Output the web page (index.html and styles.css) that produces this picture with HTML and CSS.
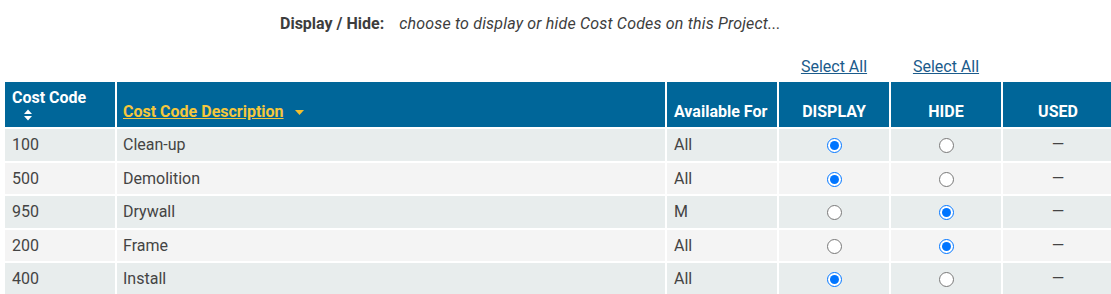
FILE: index.html
```html
<!DOCTYPE html>
<html lang="en">
<head>
<meta charset="utf-8">
<title>Cost Codes</title>
<link rel="stylesheet" href="styles.css">
</head>
<body>
<div class="intro">
  <span class="intro-label">Display / Hide:</span>
  <span class="intro-text">choose to display or hide Cost Codes on this Project...</span>
</div>
<table class="codes">
  <colgroup>
    <col class="c-code"><col class="c-desc"><col class="c-avail"><col class="c-disp"><col class="c-hide"><col class="c-used">
  </colgroup>
  <thead>
    <tr class="select-row">
      <td colspan="3"></td>
      <td><a href="#" class="select-all">Select All</a></td>
      <td><a href="#" class="select-all">Select All</a></td>
      <td></td>
    </tr>
    <tr class="head-row">
      <th class="th-code">
        <div>Cost Code</div>
        <svg class="sort-icon" width="10" height="12" viewBox="0 0 10 12"><path d="M5 0.5 L9 5 L1 5 Z M1 7 L9 7 L5 11.5 Z" fill="#fff"/></svg>
      </th>
      <th class="th-desc"><a href="#" class="sort-link">Cost Code Description</a><svg class="caret" width="9" height="5" viewBox="0 0 9 5"><path d="M0 0 L9 0 L4.5 5 Z" fill="#f2be2e"/></svg></th>
      <th class="th-avail">Available For</th>
      <th class="th-center">DISPLAY</th>
      <th class="th-center">HIDE</th>
      <th class="th-center">USED</th>
    </tr>
  </thead>
  <tbody>
    <tr>
      <td>100</td><td>Clean-up</td><td>All</td>
      <td class="center"><input type="radio" name="r1" checked></td>
      <td class="center"><input type="radio" name="r1"></td>
      <td class="center">—</td>
    </tr>
    <tr>
      <td>500</td><td>Demolition</td><td>All</td>
      <td class="center"><input type="radio" name="r2" checked></td>
      <td class="center"><input type="radio" name="r2"></td>
      <td class="center">—</td>
    </tr>
    <tr>
      <td>950</td><td>Drywall</td><td>M</td>
      <td class="center"><input type="radio" name="r3"></td>
      <td class="center"><input type="radio" name="r3" checked></td>
      <td class="center">—</td>
    </tr>
    <tr>
      <td>200</td><td>Frame</td><td>All</td>
      <td class="center"><input type="radio" name="r4"></td>
      <td class="center"><input type="radio" name="r4" checked></td>
      <td class="center">—</td>
    </tr>
    <tr>
      <td>400</td><td>Install</td><td>All</td>
      <td class="center"><input type="radio" name="r5" checked></td>
      <td class="center"><input type="radio" name="r5"></td>
      <td class="center">—</td>
    </tr>
  </tbody>
</table>
</body>
</html>
```

FILE: styles.css
```css
html, body {
  margin: 0;
  padding: 0;
  overflow: hidden;
  background: #fff;
}
body {
  font-family: Roboto, "Liberation Sans", Arial, sans-serif;
  font-size: 16px;
  color: #444;
}
.intro {
  display: flex;
  gap: 15px;
  padding: 14px 0 0 280px;
  line-height: 19px;
  color: #3d3d3d;
}
.intro-label {
  font-weight: 700;
}
.intro-text {
  font-style: italic;
  letter-spacing: 0.18px;
}
.codes {
  margin: 22px 0 0 3px;
  border-collapse: separate;
  border-spacing: 2px;
  table-layout: fixed;
  width: 1112px;
}
.c-code { width: 110px; }
.c-desc { width: 548px; }
.c-avail { width: 110px; }
.c-disp { width: 110px; }
.c-hide { width: 110px; }
.c-used { width: 110px; }

.select-row td {
  padding: 0 0 4px;
  line-height: 19px;
  text-align: center;
  vertical-align: bottom;
  background: transparent;
}
.select-all {
  color: #1b5b8b;
  text-decoration: underline;
}
.head-row th {
  background: #006699;
  color: #fff;
  font-weight: 700;
  line-height: 19px;
  padding: 6px 7px 6px;
  vertical-align: bottom;
  text-align: left;
  height: 44px;
  box-sizing: border-box;
}
.head-row .th-code {
  vertical-align: top;
}
.sort-icon {
  display: block;
  margin: 2px 0 0 11px;
}
.head-row .th-desc {
  padding-left: 6px;
}
.sort-link {
  color: #f5c73c;
  text-decoration: underline;
}
.caret {
  margin-left: 11px;
  vertical-align: 2px;
}
.head-row .th-center {
  text-align: center;
}
tbody td {
  line-height: 19.5px;
  padding: 6px 7px;
  vertical-align: middle;
  color: #444;
}
tbody td:nth-child(2) {
  padding-left: 6px;
}
tbody tr:nth-child(odd) td {
  background: #e8eded;
}
tbody tr:nth-child(even) td {
  background: #f4f4f4;
}
tbody td.center {
  text-align: center;
  padding: 0;
}
tbody input[type="radio"] {
  width: 15px;
  height: 15px;
  margin: 0;
  vertical-align: middle;
}
```
